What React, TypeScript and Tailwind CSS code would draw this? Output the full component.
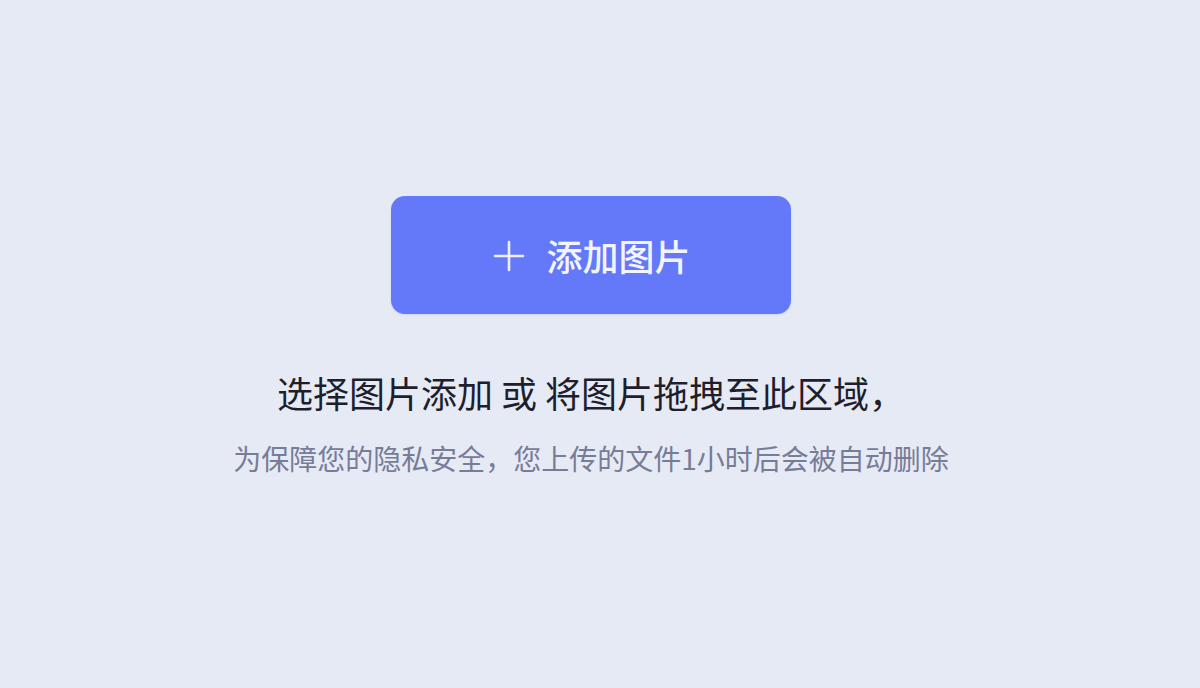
import React from "react";

export default function App() {
  return (
    <div
      className="w-[1200px] h-[688px] bg-[#e6eaf4] flex flex-col items-center pt-[196px] pr-[18px] overflow-hidden"
      style={{ fontFamily: '"Noto Sans CJK SC", "Noto Sans", sans-serif' }}
    >
      <button className="w-[400px] h-[118px] rounded-[14px] bg-[#6479f9] flex items-center justify-center gap-[21px] text-[#f2f4ff] shadow-[0_1px_2px_rgba(80,90,160,0.15)]">
        <svg width="32" height="32" viewBox="0 0 32 32" className="mt-[2px] ml-[2px]">
          <path d="M16 2 V30 M2 16 H30" stroke="#eef0ff" strokeWidth="2.6" strokeLinecap="round" fill="none" />
        </svg>
        <span className="text-[36px] leading-[36px] font-medium">添加图片</span>
      </button>
      <p className="mt-[60px] text-[36px] leading-[36px] text-[#1e1e2c] whitespace-pre">
        选择图片添加 或 将图片拖拽至此区域，
      </p>
      <p className="mt-[34px] text-[28px] leading-[28px] text-[#777c98] whitespace-pre">
        为保障您的隐私安全，您上传的文件1小时后会被自动删除
      </p>
    </div>
  );
}
